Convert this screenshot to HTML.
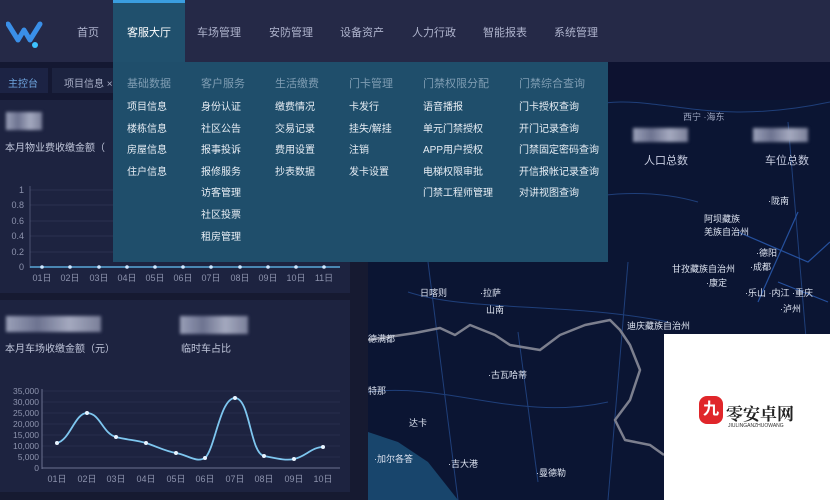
<!DOCTYPE html>
<html><head><meta charset="utf-8"><style>
*{margin:0;padding:0;box-sizing:border-box}
body{width:830px;height:500px;overflow:hidden;background:#161a31;font-family:"Liberation Sans","Noto Sans CJK SC",sans-serif;position:relative;color:#c8cde0}
.a{position:absolute;white-space:nowrap}
.nav{left:0;top:0;width:830px;height:62px;background:#252947}
.nav span{position:absolute;top:24px;font-size:11px;color:#aeb3cc}
.dd{left:113px;top:0;width:72px;height:62px;background:#20506d;border-top:3px solid #3a9ee0}
.menu{left:113px;top:62px;width:495px;height:200px;background:#1f4e6b}
.menu div{position:absolute;font-size:10px;color:#e8eef5}
.menu .h{color:#7f9db3;font-size:11px}
.panel{background:#1d2340}
.blur{background:linear-gradient(90deg,#9aa0b8,#6d7390,#a4a9bf,#7a7f99);filter:blur(1.5px)}
.ax{font-size:9px;fill:#8d93ad;font-family:"Liberation Sans","Noto Sans CJK SC",sans-serif}
.map{left:368px;top:62px;width:462px;height:438px;background:#0b1533;overflow:hidden}
.mt{font-size:9px;color:#dde3f0}
</style></head><body>
<div class="a nav">
 <svg class="a" style="left:6px;top:18px" width="38" height="32" viewBox="0 0 38 32"><path d="M2 6 L12 22 L18 12 L24 22 L34 6" fill="none" stroke="#3a8fe8" stroke-width="5" stroke-linejoin="round" stroke-linecap="round"/><circle cx="29" cy="27" r="3" fill="#3ec3ff"/></svg>
 <span style="left:77px">首页</span>
 <span style="left:197px">车场管理</span>
 <span style="left:269px">安防管理</span>
 <span style="left:340px">设备资产</span>
 <span style="left:412px">人力行政</span>
 <span style="left:483px">智能报表</span>
 <span style="left:554px">系统管理</span>
</div>
<div class="a dd"><span style="position:absolute;left:14px;top:21px;font-size:11px;color:#fff">客服大厅</span></div>
<div class="a" style="left:0;top:62px;width:368px;height:38px;background:#141832"></div>
<div class="a" style="left:0;top:68px;width:48px;height:25px;background:#1c2344;font-size:10px;color:#6fa6e0;padding:7px 0 0 8px">主控台</div>
<div class="a" style="left:52px;top:68px;width:62px;height:25px;background:#1c2340;font-size:10px;color:#aab0c8;padding:7px 0 0 12px">项目信息 ×</div>

<div class="a panel" style="left:0;top:100px;width:350px;height:193px"></div>
<div class="a blur" style="left:6px;top:112px;width:36px;height:18px"></div>
<div class="a" style="left:5px;top:139px;font-size:10px;color:#c0c6da">本月物业费收缴金额（</div>
<svg class="a" style="left:0;top:180px" width="350" height="110">
 <g stroke="#39405e" stroke-width="0.6">
  <line x1="30" y1="10" x2="340" y2="10"/><line x1="30" y1="25" x2="340" y2="25"/><line x1="30" y1="41" x2="340" y2="41"/><line x1="30" y1="56" x2="340" y2="56"/><line x1="30" y1="72" x2="340" y2="72"/>
  <line x1="30" y1="6" x2="30" y2="88" stroke="#6b7290"/>
 </g>
 <line x1="30" y1="87" x2="340" y2="87" stroke="#5aa8d8" stroke-width="1.5"/>
 <g class="ax" text-anchor="end"><text x="24" y="13">1</text><text x="24" y="28">0.8</text><text x="24" y="44">0.6</text><text x="24" y="59">0.4</text><text x="24" y="75">0.2</text><text x="24" y="90">0</text></g>
 <g fill="#cfe8ff"><circle cx="42" cy="87" r="1.8"/><circle cx="70" cy="87" r="1.8"/><circle cx="99" cy="87" r="1.8"/><circle cx="127" cy="87" r="1.8"/><circle cx="155" cy="87" r="1.8"/><circle cx="183" cy="87" r="1.8"/><circle cx="211" cy="87" r="1.8"/><circle cx="240" cy="87" r="1.8"/><circle cx="268" cy="87" r="1.8"/><circle cx="296" cy="87" r="1.8"/><circle cx="324" cy="87" r="1.8"/></g>
 <g class="ax" text-anchor="middle"><text x="42" y="101">01日</text><text x="70" y="101">02日</text><text x="99" y="101">03日</text><text x="127" y="101">04日</text><text x="155" y="101">05日</text><text x="183" y="101">06日</text><text x="211" y="101">07日</text><text x="240" y="101">08日</text><text x="268" y="101">09日</text><text x="296" y="101">10日</text><text x="324" y="101">11日</text></g>
</svg>

<div class="a panel" style="left:0;top:300px;width:350px;height:192px"></div>
<div class="a blur" style="left:6px;top:316px;width:95px;height:16px"></div>
<div class="a blur" style="left:180px;top:316px;width:68px;height:18px"></div>
<div class="a" style="left:5px;top:340px;font-size:10px;color:#c0c6da">本月车场收缴金额（元）</div>
<div class="a" style="left:181px;top:340px;font-size:10px;color:#c0c6da">临时车占比</div>
<svg class="a" style="left:0;top:385px" width="350" height="105">
 <g stroke="#323a5a" stroke-width="0.6">
  <line x1="42" y1="6" x2="340" y2="6"/><line x1="42" y1="17" x2="340" y2="17"/><line x1="42" y1="28" x2="340" y2="28"/><line x1="42" y1="39" x2="340" y2="39"/><line x1="42" y1="50" x2="340" y2="50"/><line x1="42" y1="61" x2="340" y2="61"/><line x1="42" y1="72" x2="340" y2="72"/>
 </g>
 <line x1="42" y1="4" x2="42" y2="84" stroke="#6b7290"/><line x1="42" y1="83" x2="340" y2="83" stroke="#6b7290"/>
 <g class="ax" text-anchor="end" style="font-size:8.5px"><text x="39" y="9">35,000</text><text x="39" y="20">30,000</text><text x="39" y="31">25,000</text><text x="39" y="42">20,000</text><text x="39" y="53">15,000</text><text x="39" y="64">10,000</text><text x="39" y="75">5,000</text><text x="39" y="86">0</text></g>
 <path d="M57 58 C70 55 75 28 87 28 C100 28 103 49 116 52 C128 55 135 55 146 58 C158 62 165 66 176 68 C188 70 196 78 205 73 C215 64 220 13 235 13 C250 13 250 68 264 71 C275 73 285 76 294 74 C305 72 312 62 323 62" fill="none" stroke="#7ec6ef" stroke-width="1.8"/>
 <g fill="#e8f4ff"><circle cx="57" cy="58" r="2"/><circle cx="87" cy="28" r="2"/><circle cx="116" cy="52" r="2"/><circle cx="146" cy="58" r="2"/><circle cx="176" cy="68" r="2"/><circle cx="205" cy="73" r="2"/><circle cx="235" cy="13" r="2"/><circle cx="264" cy="71" r="2"/><circle cx="294" cy="74" r="2"/><circle cx="323" cy="62" r="2"/></g>
 <g class="ax" text-anchor="middle"><text x="57" y="97">01日</text><text x="87" y="97">02日</text><text x="116" y="97">03日</text><text x="146" y="97">04日</text><text x="176" y="97">05日</text><text x="205" y="97">06日</text><text x="235" y="97">07日</text><text x="264" y="97">08日</text><text x="294" y="97">09日</text><text x="323" y="97">10日</text></g>
</svg>

<div class="a map">
 <svg width="462" height="438" style="position:absolute;left:0;top:0">
  <g fill="none" stroke="#1f3f7a" stroke-width="1">
   <path d="M0 60 C60 40 120 80 200 50 S320 70 462 40"/><path d="M0 140 C50 130 80 160 140 150 S260 120 330 140"/><path d="M40 230 C100 250 200 240 300 260"/><path d="M0 330 C80 320 150 360 240 340"/><path d="M150 270 L170 420"/><path d="M60 200 L90 438"/><path d="M260 200 L240 438"/><path d="M420 60 L440 300"/>
  </g>
  <g fill="none" stroke="#2c5fb8" stroke-width="1.2" opacity=".8"><path d="M370 170 L440 200 L462 180"/><path d="M390 240 L430 150"/><path d="M410 220 L460 240"/></g>
  <path d="M0 278 L47 271 L72 266 L87 273 L102 263 L127 273 L142 283 L172 288 L192 273 L217 263 L242 258 L252 268 L262 283 L272 308 L262 338 L247 358 L257 378 L282 383 L296 393" fill="none" stroke="#7c7f8e" stroke-width="2.5" stroke-linejoin="round"/>
  <path d="M0 370 L30 380 L60 400 L90 438 L0 438Z" fill="#18456c"/>
 </svg>
 <div class="a" style="left:232px;top:0;width:230px;height:38px;background:#0d1230"></div>
 <div class="a blur" style="left:265px;top:66px;width:55px;height:14px"></div>
 <div class="a blur" style="left:385px;top:66px;width:55px;height:14px"></div>
 <div class="a" style="left:276px;top:90px;font-size:11px;color:#c8cde0">人口总数</div>
 <div class="a" style="left:397px;top:90px;font-size:11px;color:#c8cde0">车位总数</div>
 <div class="a mt" style="left:315px;top:48px;color:#9aa3bd">西宁 ·海东</div>
 <div class="a mt" style="left:336px;top:150px">阿坝藏族<br>羌族自治州</div>
 <div class="a mt" style="left:400px;top:132px">·陇南</div>
 <div class="a mt" style="left:52px;top:224px">日喀则</div>
 <div class="a mt" style="left:112px;top:224px">·拉萨</div>
 <div class="a mt" style="left:118px;top:241px">山南</div>
 <div class="a mt" style="left:0;top:270px">德满都</div>
 <div class="a mt" style="left:120px;top:306px">·古瓦哈蒂</div>
 <div class="a mt" style="left:0;top:322px">特那</div>
 <div class="a mt" style="left:41px;top:354px">达卡</div>
 <div class="a mt" style="left:6px;top:390px">·加尔各答</div>
 <div class="a mt" style="left:80px;top:395px">·吉大港</div>
 <div class="a mt" style="left:168px;top:404px">·曼德勒</div>
 <div class="a mt" style="left:259px;top:257px">迪庆藏族自治州</div>
 <div class="a mt" style="left:304px;top:200px">甘孜藏族自治州</div>
 <div class="a mt" style="left:338px;top:214px">·康定</div>
 <div class="a mt" style="left:388px;top:184px">·德阳</div>
 <div class="a mt" style="left:382px;top:198px">·成都</div>
 <div class="a mt" style="left:377px;top:224px">·乐山 ·内江 ·重庆</div>
 <div class="a mt" style="left:412px;top:240px">·泸州</div>
</div>
<div class="a" style="left:664px;top:334px;width:166px;height:166px;background:#fff">
 <div class="a" style="left:35px;top:62px;width:24px;height:28px;background:#e0262a;border-radius:8px;color:#fff;font-size:16px;text-align:center;line-height:28px;font-weight:bold">九</div>
 <div class="a" style="left:62px;top:66px;font-size:17px;color:#222;font-weight:bold;font-family:'Noto Serif CJK SC',serif">零安卓网</div>
 <div class="a" style="left:64px;top:89px;font-size:5px;color:#333">JIULINGANZHUOWANG</div>
</div>

<div class="a menu">
 <div class="h" style="left:14px;top:13px">基础数据</div>
 <div class="h" style="left:88px;top:13px">客户服务</div>
 <div class="h" style="left:162px;top:13px">生活缴费</div>
 <div class="h" style="left:236px;top:13px">门卡管理</div>
 <div class="h" style="left:310px;top:13px">门禁权限分配</div>
 <div class="h" style="left:406px;top:13px">门禁综合查询</div>
 <div style="left:14px;top:36px">项目信息</div><div style="left:14px;top:58px">楼栋信息</div><div style="left:14px;top:79px">房屋信息</div><div style="left:14px;top:101px">住户信息</div>
 <div style="left:88px;top:36px">身份认证</div><div style="left:88px;top:58px">社区公告</div><div style="left:88px;top:79px">报事投诉</div><div style="left:88px;top:101px">报修服务</div><div style="left:88px;top:122px">访客管理</div><div style="left:88px;top:144px">社区投票</div><div style="left:88px;top:166px">租房管理</div>
 <div style="left:162px;top:36px">缴费情况</div><div style="left:162px;top:58px">交易记录</div><div style="left:162px;top:79px">费用设置</div><div style="left:162px;top:101px">抄表数据</div>
 <div style="left:236px;top:36px">卡发行</div><div style="left:236px;top:58px">挂失/解挂</div><div style="left:236px;top:79px">注销</div><div style="left:236px;top:101px">发卡设置</div>
 <div style="left:310px;top:36px">语音播报</div><div style="left:310px;top:58px">单元门禁授权</div><div style="left:310px;top:79px">APP用户授权</div><div style="left:310px;top:101px">电梯权限审批</div><div style="left:310px;top:122px">门禁工程师管理</div>
 <div style="left:406px;top:36px">门卡授权查询</div><div style="left:406px;top:58px">开门记录查询</div><div style="left:406px;top:79px">门禁固定密码查询</div><div style="left:406px;top:101px">开信报帐记录查询</div><div style="left:406px;top:122px">对讲视图查询</div>
</div>
</body></html>
